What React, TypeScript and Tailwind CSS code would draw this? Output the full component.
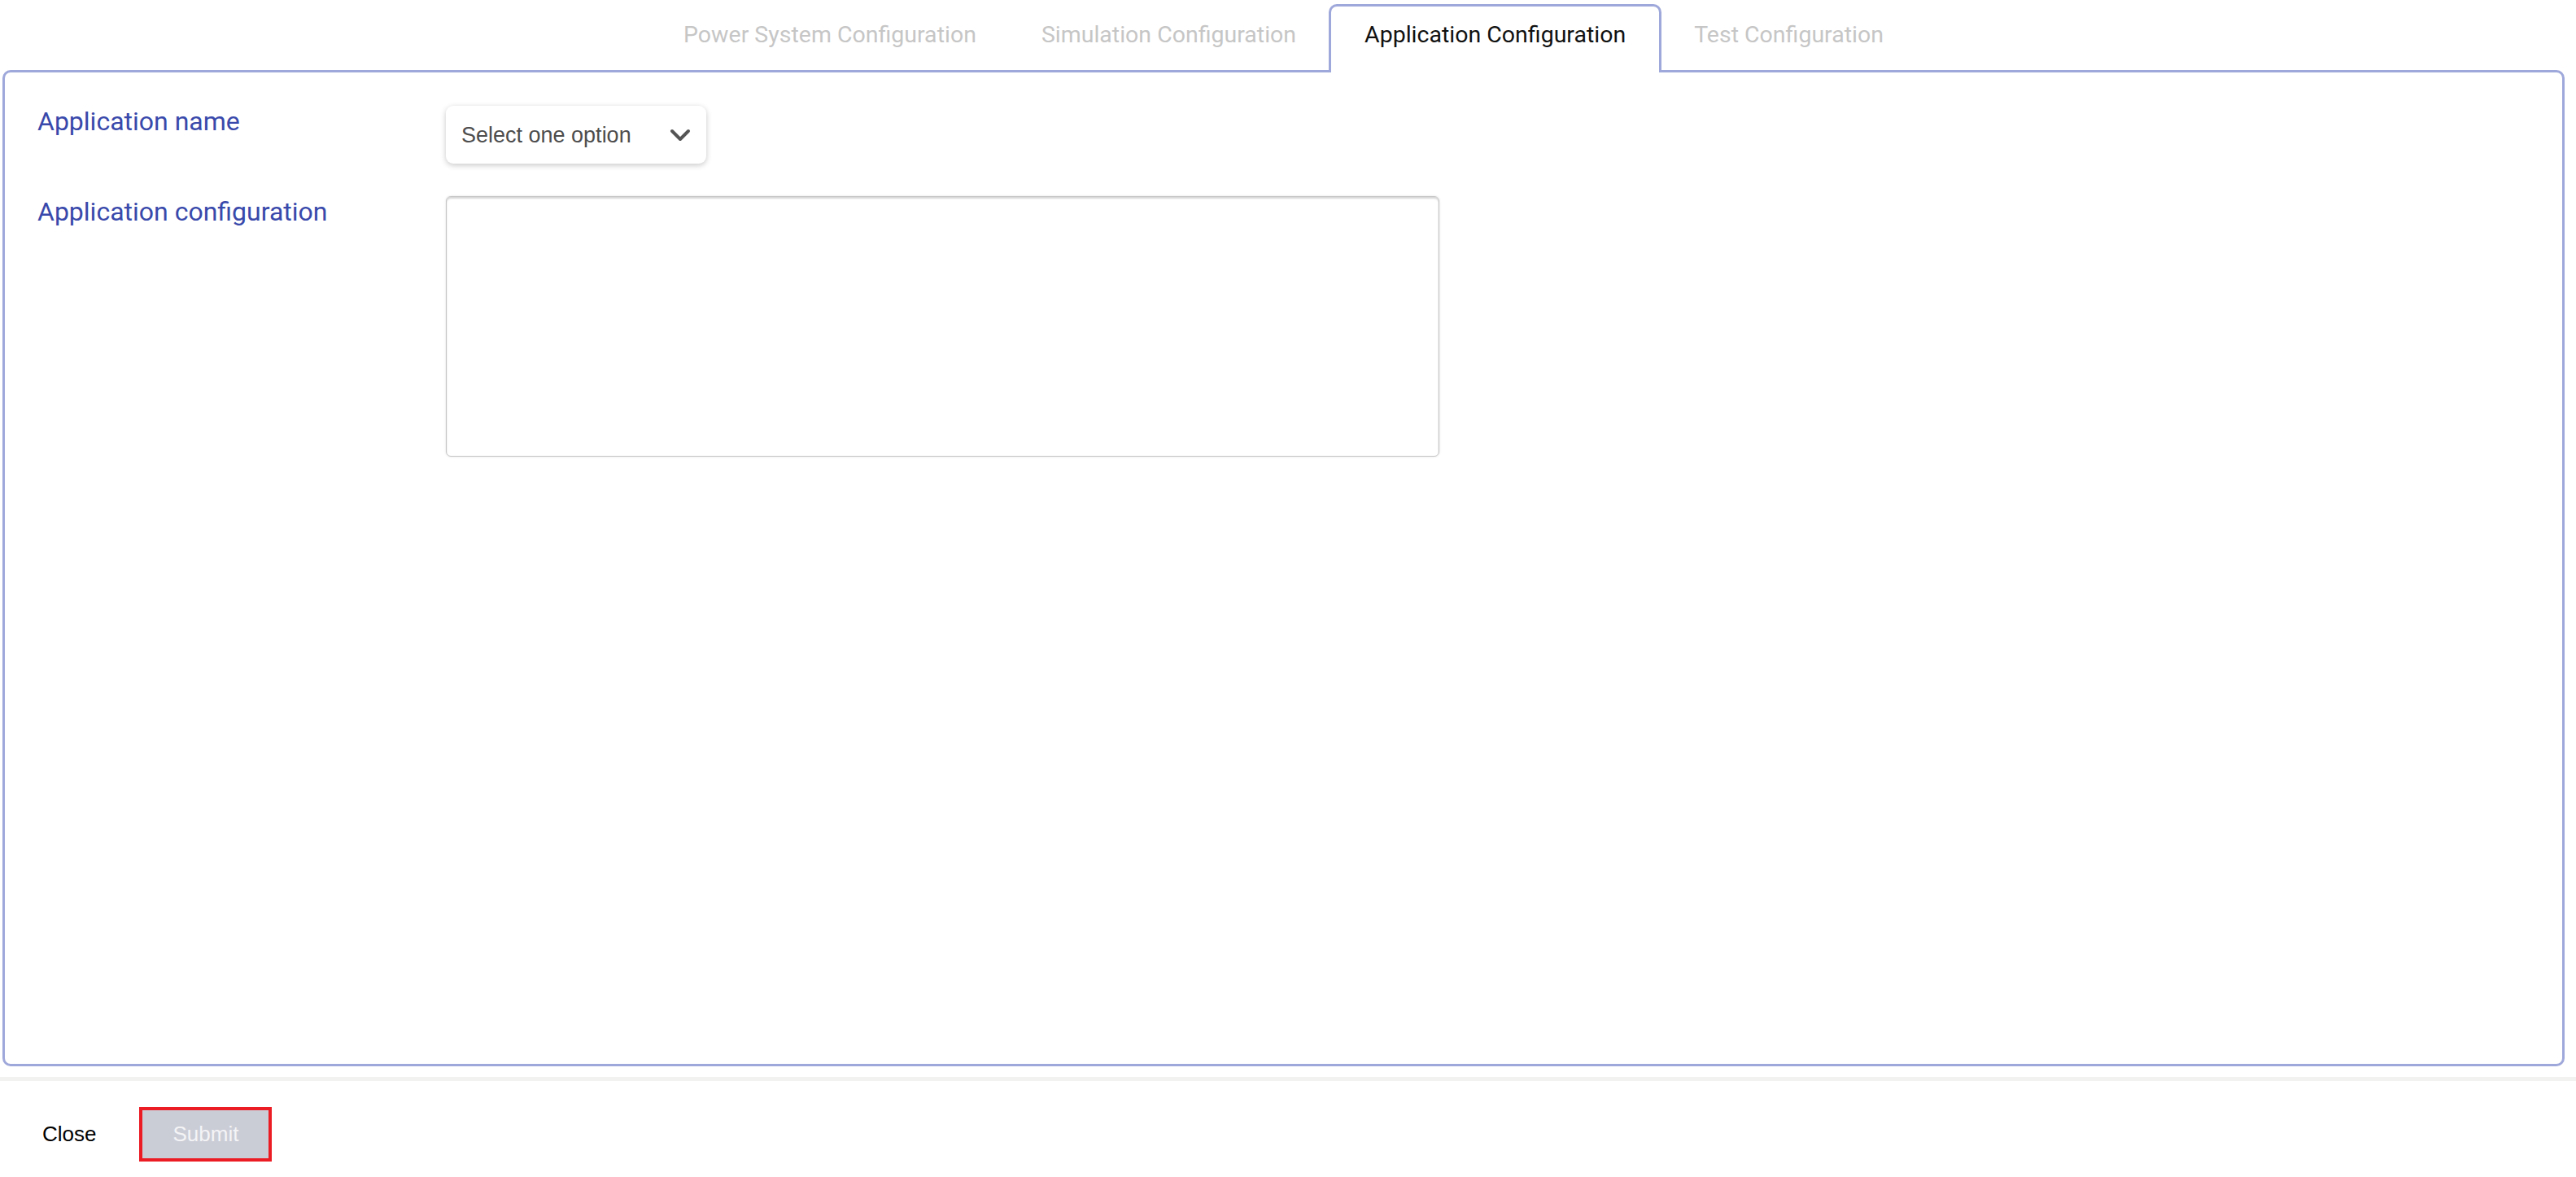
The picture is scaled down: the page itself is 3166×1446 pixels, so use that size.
import { ChevronDown } from "lucide-react";

const tabs = [
  "Power System Configuration",
  "Simulation Configuration",
  "Application Configuration",
  "Test Configuration",
];

const ACTIVE = "Application Configuration";

export default function App() {
  return (
    <div className="w-[3166px] h-[1446px] bg-white overflow-hidden flex flex-col">
      {/* Tab bar */}
      <div className="ml-[3px] w-[3149px] pt-[5px] flex justify-center font-['Roboto',sans-serif] text-[28.5px]">
        {tabs.map((t) =>
          t === ACTIVE ? (
            <div
              key={t}
              className="relative z-10 -mb-[3px] bg-white border-[3px] border-b-0 border-[#9fa8da] rounded-t-[10px] px-[41px] pt-[18px] pb-[29px] leading-[34px] text-[#111]"
            >
              {t}
            </div>
          ) : (
            <div
              key={t}
              className="-mb-[3px] border-[3px] border-b-0 border-transparent px-[37px] pt-[18px] pb-[29px] leading-[34px] text-[#c6c6c6]"
            >
              {t}
            </div>
          )
        )}
      </div>

      {/* Panel */}
      <div className="ml-[3px] w-[3149px] h-[1224px] shrink-0 border-[3px] border-[#9fa8da] rounded-[10px] px-[40px] pt-[41px]">
        <div className="grid grid-cols-[502px_1fr] gap-y-[40px] font-['Roboto',sans-serif] text-[32px] leading-[38px] text-[#3949ab]">
          <div>Application name</div>
          <div>
            <button className="w-[320px] h-[71px] flex items-center justify-between pl-[19px] pr-[12px] bg-white rounded-[9px] shadow-[0_2px_7px_rgba(0,0,0,0.22)] font-['Liberation_Sans',sans-serif] text-[27px] text-[#4d4d4d]">
              <span>Select one option</span>
              <ChevronDown size={40} strokeWidth={2.4} color="#555" />
            </button>
          </div>
          <div>Application configuration</div>
          <div>
            <textarea className="block w-[1221px] h-[320px] resize-none border border-[#c4c4c4] rounded-[6px] shadow-[0_0_3px_rgba(0,0,0,0.12),inset_0_2px_2px_rgba(0,0,0,0.16)] outline-none" />
          </div>
        </div>
      </div>

      {/* Footer */}
      <div className="mt-[13px] h-[5px] shrink-0 bg-[#f2f2f0]" />
      <div className="pt-[32px] flex items-center pl-[52px] gap-[53px] font-['Liberation_Sans',sans-serif] text-[26px]">
        <button className="text-black">Close</button>
        <button className="w-[163px] h-[67px] border-[4px] border-[#ec1c24] bg-[#cbcdd6] text-[#f4f4f6]">
          Submit
        </button>
      </div>
    </div>
  );
}
